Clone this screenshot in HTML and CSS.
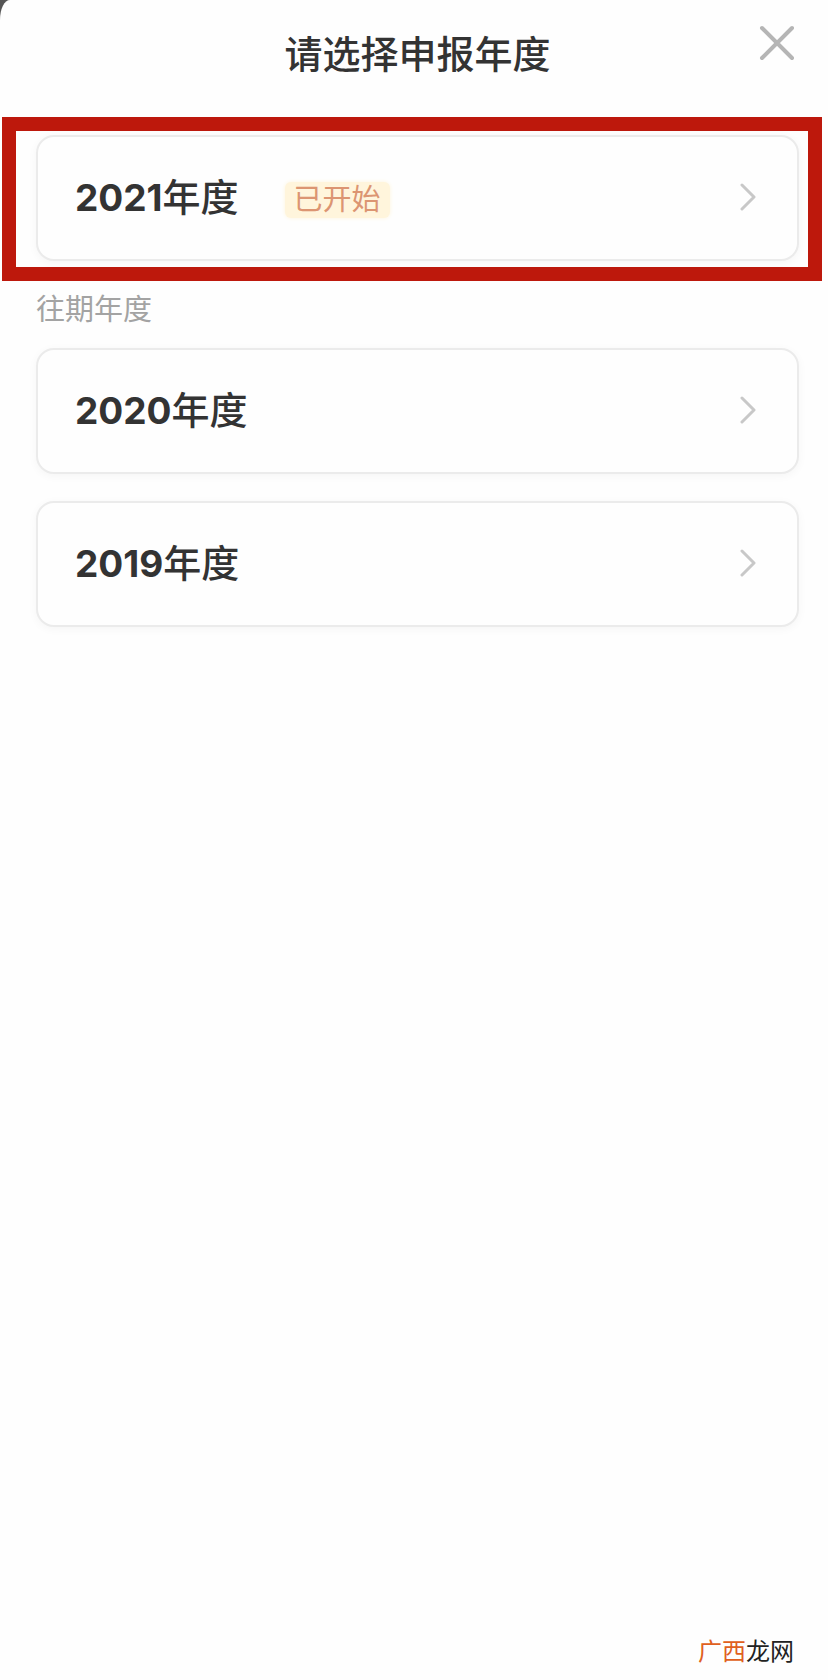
FILE: index.html
```html
<!DOCTYPE html>
<html lang="zh-CN">
<head>
<meta charset="utf-8">
<meta name="viewport" content="width=device-width, initial-scale=1">
<title>请选择申报年度</title>
<link rel="stylesheet" href="styles.css">
</head>
<body>
<div class="sheet">
  <header class="header">
    <h1 class="title">请选择申报年度</h1>
    <button class="close" type="button" aria-label="关闭">
      <svg class="close-icon" viewBox="0 0 36 36" aria-hidden="true"><path d="M3 3 33 33M33 3 3 33"/></svg>
    </button>
  </header>
  <main class="main">
    <div class="highlight">
      <button class="card" type="button">
        <span class="year"><span class="digits">2021</span>年度</span>
        <span class="tag">已开始</span>
        <svg class="chevron" viewBox="0 0 16 28" aria-hidden="true"><path d="M2 2 14 14 2 26"/></svg>
      </button>
    </div>
    <h2 class="section-label">往期年度</h2>
    <div class="list">
      <button class="card" type="button">
        <span class="year"><span class="digits">2020</span>年度</span>
        <svg class="chevron" viewBox="0 0 16 28" aria-hidden="true"><path d="M2 2 14 14 2 26"/></svg>
      </button>
      <button class="card" type="button">
        <span class="year"><span class="digits">2019</span>年度</span>
        <svg class="chevron" viewBox="0 0 16 28" aria-hidden="true"><path d="M2 2 14 14 2 26"/></svg>
      </button>
    </div>
  </main>
  <footer class="footer"><span class="brand">广西</span>龙网</footer>
</div>
</body>
</html>
```
FILE: styles.css
```css
* {
  box-sizing: border-box;
}

body {
  margin: 0;
  background: #555;
  color: #333;
  font-family: Inter, "Noto Sans CJK SC", sans-serif;
}

.sheet {
  display: flex;
  flex-direction: column;
  min-height: 100vh;
  background: #fefefe;
  border-top-left-radius: 10px 20px;
}

.header {
  display: grid;
  grid-template-columns: 40px 1fr 40px;
  padding: 25px 29px 34px 36px;
}

.title {
  grid-column: 2;
  margin: 0;
  font-size: 38px;
  line-height: 58px;
  font-weight: 500;
  text-align: center;
}

.close {
  display: flex;
  width: 36px;
  height: 36px;
  padding: 0;
  border: 0;
  background: none;
}

.close-icon {
  width: 36px;
  height: 36px;
  fill: none;
  stroke: #b5b5b5;
  stroke-width: 4;
  stroke-linecap: round;
}

.highlight {
  margin: 0 6px 0 2px;
  padding: 4px 9px 6px 20px;
  border: 14px solid #bd180c;
}

.card {
  display: flex;
  align-items: center;
  width: 100%;
  height: 126px;
  padding: 0 41px 2px 37px;
  border: 2px solid #ebebeb;
  border-radius: 18px;
  background: #fefefe;
  box-shadow: 0 2px 10px rgba(0, 0, 0, 0.04);
  color: inherit;
  font-family: inherit;
  text-align: left;
}

.year {
  font-size: 38px;
  line-height: 56px;
  font-weight: 500;
}

.digits {
  font-size: 37px;
  font-weight: 700;
}

.tag {
  margin: 6px 0 0 46px;
  padding: 0 9px;
  border-radius: 6px;
  background: #fff5dc;
  box-shadow: 0 0 4px #fff5dc;
  color: #dc9572;
  font-size: 29px;
  line-height: 36px;
}

.chevron {
  width: 16px;
  height: 28px;
  margin-left: auto;
  fill: none;
  stroke: #c8c8c8;
  stroke-width: 3;
  stroke-linecap: round;
  stroke-linejoin: round;
}

.section-label {
  margin: 0;
  padding: 0 36px 9px;
  color: #a3a3a3;
  font-size: 29px;
  line-height: 58px;
  font-weight: 400;
}

.list {
  display: flex;
  flex-direction: column;
  gap: 27px;
  padding: 0 29px 0 36px;
}

.footer {
  margin-top: auto;
  padding: 0 34px 10px;
  color: #222;
  font-size: 24px;
  line-height: 36px;
  text-align: right;
}

.brand {
  color: #e06020;
}
```
